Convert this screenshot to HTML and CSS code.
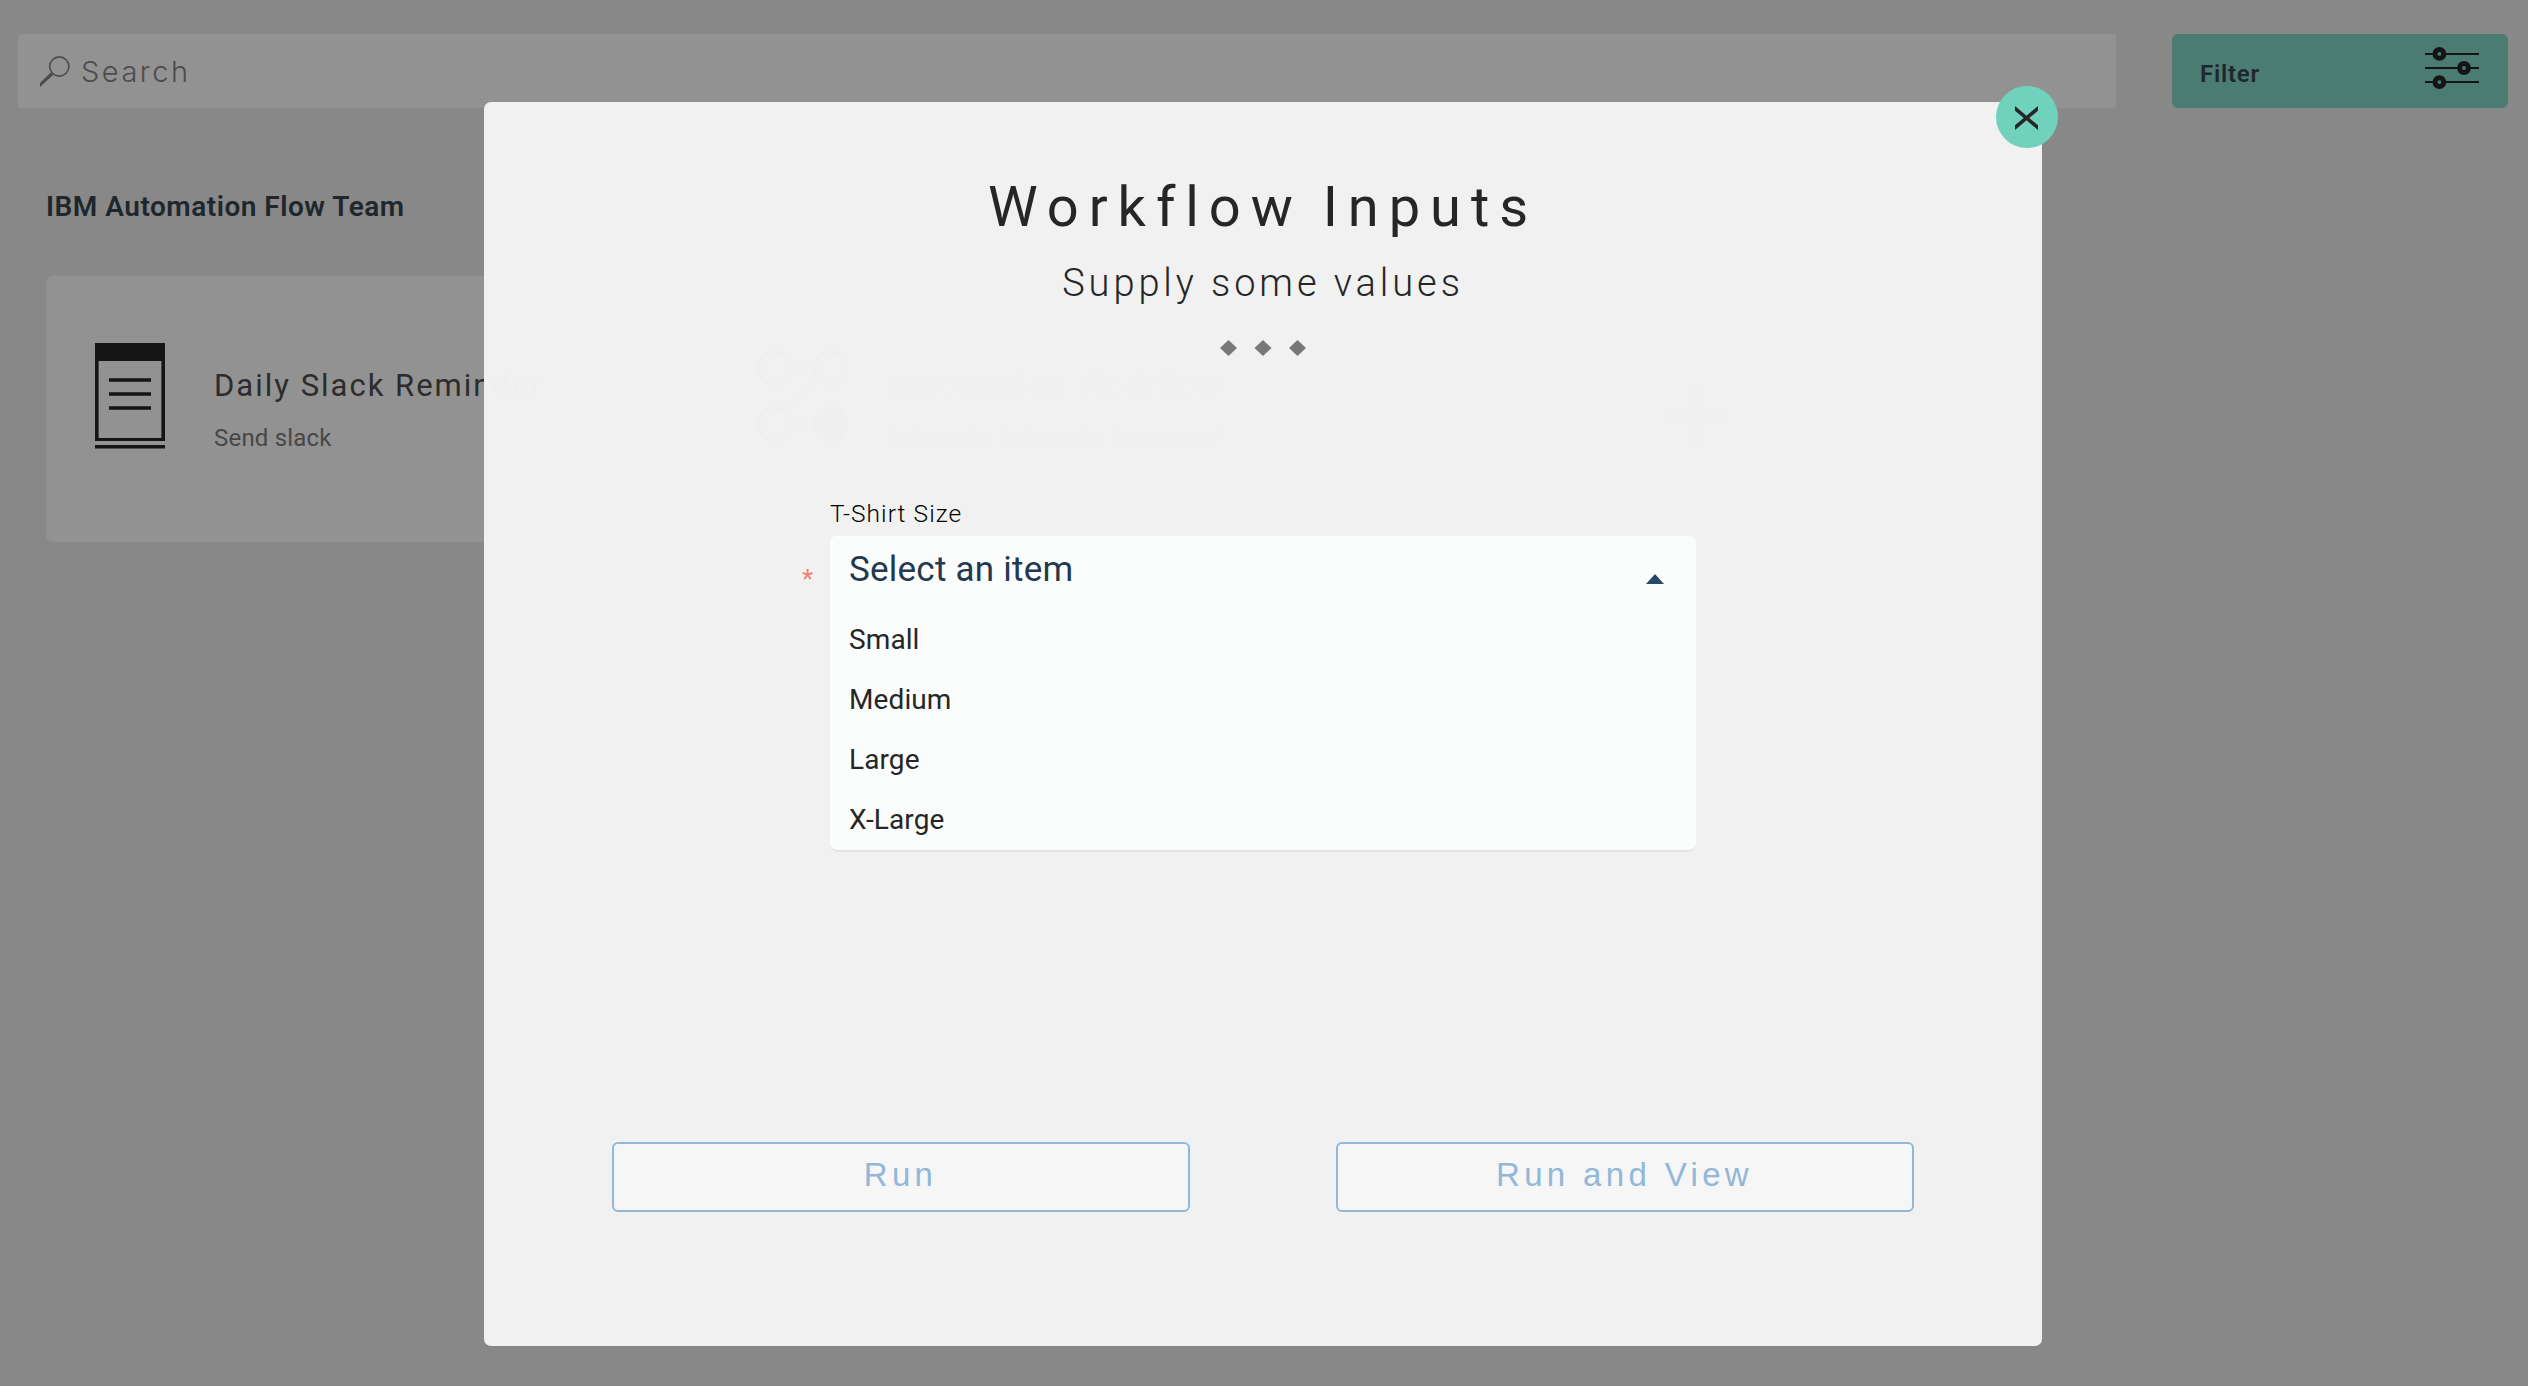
FILE: index.html
```
<!DOCTYPE html>
<html lang="en">
<head>
<meta charset="utf-8">
<title>Workflow Inputs</title>
<link rel="stylesheet" href="styles.css">
</head>
<body>
<main class="page">
  <div class="topbar">
    <div class="search">
      <svg class="search-icon" width="32" height="32" viewBox="0 0 32 32"><circle cx="19.3" cy="11.5" r="9.6" fill="none" stroke="#4c4c4c" stroke-width="1.6"/><path d="M11 17.2 0 28v4L13.6 19.4Z" fill="#4c4c4c"/></svg>
      <span class="search-text">Search</span>
    </div>
    <div class="filter">
      <span>Filter</span>
      <svg width="54" height="46" viewBox="0 0 54 46"><g stroke="#151515" stroke-width="2"><path d="M0 8.9h54M0 23h54M0 37.1h54"/></g><g fill="#4b7c71" stroke="#151515" stroke-width="5"><circle cx="14.4" cy="8.9" r="4.4"/><circle cx="39" cy="23" r="4.4"/><circle cx="14.4" cy="37.1" r="4.4"/></g></svg>
    </div>
  </div>
  <h2 class="team">IBM Automation Flow Team</h2>
  <div class="cards">
    <article class="card">
      <div class="card-icon">
        <svg width="70" height="106" viewBox="0 0 70 106"><path d="M0 0h70v98H0ZM3.6 18v77h62.8V18Z" fill="#151515" fill-rule="evenodd"/><path d="M0 102h70v3.6H0ZM14 35.2h42v3.6H14ZM14 49.2h42v3.6H14ZM14 63.2h42v3.6H14Z" fill="#151515"/></svg>
      </div>
      <div class="card-text">
        <h3 class="card-title">Daily Slack Reminder</h3>
        <p class="card-desc">Send slack</p>
      </div>
    </article>
    <article class="card card-muted">
      <div class="card-icon">
        <svg width="94" height="94" viewBox="0 0 94 94"><g fill="none" stroke="#151515" stroke-width="3"><circle cx="19" cy="19" r="16"/><circle cx="75" cy="19" r="16"/><circle cx="19" cy="75" r="16"/><circle cx="75" cy="75" r="16" fill="#151515"/><path d="M35 19h24M35 75h24M64 31 31 64"/></g></svg>
      </div>
      <div class="card-text">
        <h3 class="card-title">Automation Workflow</h3>
        <p class="card-desc">Automate Automate Automate!</p>
      </div>
    </article>
    <article class="card card-add">
      <svg width="56" height="56" viewBox="0 0 56 56"><path d="M28 0v56M0 28h56" stroke="#5c5c5c" stroke-width="7"/></svg>
    </article>
  </div>
</main>

<section class="modal">
  <button class="close" aria-label="Close"><svg width="23" height="24" viewBox="0 0 23 24"><path d="M0 0v4.7L8.7 12 0 19.3V24L11.5 14.3 23 24v-4.7L14.3 12 23 4.7V0L11.5 9.7Z" fill="#262626"/></svg></button>
  <h1 class="title">Workflow Inputs</h1>
  <p class="subtitle">Supply some values</p>
  <svg class="diamonds" width="86" height="16" viewBox="0 0 86 16"><path d="M8.5 0 17 8l-8.5 8L0 8ZM43 0l8.5 8-8.5 8-8.5-8ZM77.5 0 86 8l-8.5 8L69 8Z" fill="#777"/></svg>
  <div class="field">
    <label class="label">T-Shirt Size</label>
    <div class="select">
      <span class="required">*</span>
      <div class="select-head">
        <span>Select an item</span>
        <svg class="arrow" width="18" height="10" viewBox="0 0 18 10"><path d="M9 0 18 10H0Z" fill="#29496a"/></svg>
      </div>
      <ul class="options">
        <li>Small</li>
        <li>Medium</li>
        <li>Large</li>
        <li>X-Large</li>
      </ul>
    </div>
  </div>
  <div class="actions">
    <button class="action">Run</button>
    <button class="action">Run and View</button>
  </div>
</section>
</body>
</html>
```
FILE: styles.css
```
* { box-sizing: border-box; margin: 0; padding: 0; }
body {
  position: relative;
  height: 1386px;
  overflow: hidden;
  background: #888;
  font-family: Roboto, sans-serif;
  color: #262626;
}
svg { display: block; flex: none; }

.topbar { display: flex; gap: 56px; padding: 34px 20px 0 18px; }
.search {
  flex: 1;
  height: 74px;
  display: flex;
  align-items: center;
  padding-left: 22px;
  background: #929292;
  border-radius: 3px;
}
.search-icon { margin-right: 9px; }
.search-text { padding-top: 2px; font: 300 29px/40px Inter, sans-serif; letter-spacing: 2.5px; color: #4c4c4c; }
.filter {
  width: 336px;
  height: 74px;
  display: flex;
  justify-content: space-between;
  padding: 11px 29px 0 28px;
  background: #4b7c71;
  border-radius: 6px;
  font-size: 24px;
  font-weight: 600;
  line-height: 58px;
  letter-spacing: .75px;
  color: #1f272c;
}

.team { margin: 79px 0 0 46px; font-size: 28px; font-weight: 600; line-height: 40px; letter-spacing: .5px; color: #1f272c; }

.cards { display: flex; gap: 58px; margin: 49px 0 0 46px; }
.card { flex: none; display: flex; width: 614px; height: 266px; padding-left: 37px; background: #929292; border-radius: 7px; }
.card-icon { width: 94px; height: 240px; display: flex; align-items: center; justify-content: center; margin-right: 37px; }
.card-text { padding-top: 90px; white-space: nowrap; }
.card-title { font-size: 31px; font-weight: 400; line-height: 40px; letter-spacing: 2px; color: #2c2c2c; }
.card-desc { margin-top: 16px; font-size: 24px; line-height: 32px; letter-spacing: .2px; color: #474747; }
.card-muted .card-title, .card-muted .card-desc { color: #5c5c5c; }
.card-add { padding: 16px 0 0; align-items: center; justify-content: center; }

.modal {
  position: absolute;
  left: 484px;
  top: 102px;
  width: 1558px;
  height: 1244px;
  display: flex;
  flex-direction: column;
  align-items: center;
  padding: 70px 0 134px;
  background: rgba(243, 243, 243, .984);
  border-radius: 7px;
}
.close {
  position: absolute;
  left: 1512px;
  top: -16px;
  width: 62px;
  height: 62px;
  display: flex;
  align-items: center;
  justify-content: center;
  padding: 2px 2px 0 0;
  border: 0;
  border-radius: 50%;
  background: #70d2bd;
}
.title { font-size: 56px; font-weight: 400; line-height: 70px; letter-spacing: 9.95px; word-spacing: -4px; }
.subtitle { margin-top: 18px; font-size: 38px; font-weight: 300; line-height: 46px; letter-spacing: 3.91px; }
.diamonds { margin-top: 34px; }

.field { width: 866px; margin-top: 143px; }
.label { display: block; font-size: 24.5px; font-weight: 300; line-height: 30px; letter-spacing: 1.06px; color: #000; }
.select { position: relative; margin-top: 7px; background: #fafdfc; border-bottom: 2px solid #e2e4e4; border-radius: 6px 6px 8px 8px; }
.required { position: absolute; left: -28px; top: 28px; font-size: 26px; line-height: 30px; color: #f0836c; }
.select-head {
  display: flex;
  justify-content: space-between;
  height: 74px;
  padding: 14px 32px 0 19px;
  font-size: 35px;
  line-height: 40px;
  letter-spacing: .24px;
  color: #24384f;
}
.arrow { margin-top: 24px; }
.options { list-style: none; }
.options li { height: 60px; padding-left: 19px; font-size: 28px; line-height: 60px; letter-spacing: .1px; }

.actions { display: flex; gap: 146px; margin-top: auto; }
.action {
  width: 578px;
  height: 70px;
  padding: 0 1px 5px 0;
  border: 2px solid #93b7d7;
  border-radius: 6px;
  background: #f6f6f6;
  color: #93b7d7;
  font: 33px/40px "Liberation Sans", Arial, sans-serif;
  letter-spacing: 4.35px;
}
```
